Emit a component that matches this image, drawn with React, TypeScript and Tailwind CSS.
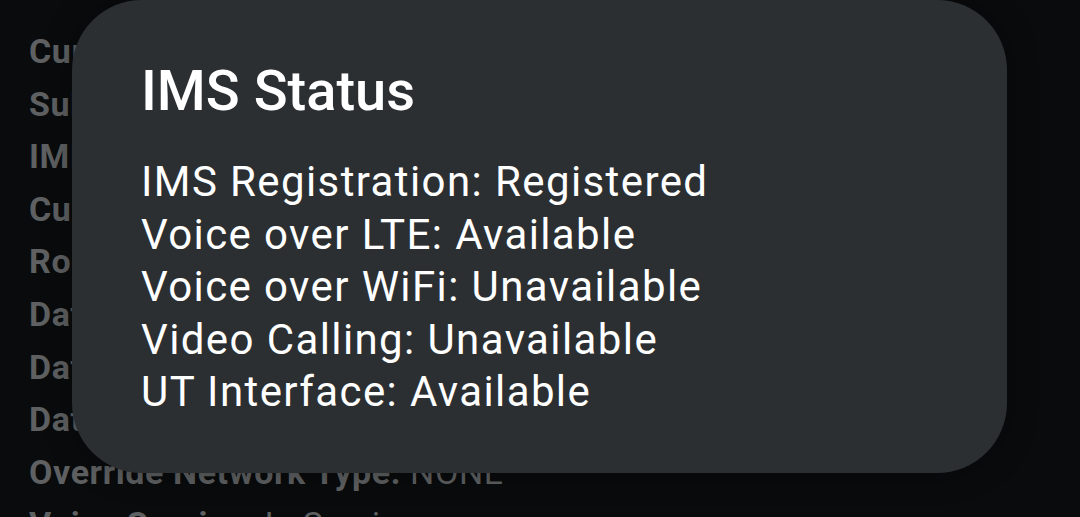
import React from "react";

const bgLines: { b: string; r?: string }[] = [
  { b: "Current subId:", r: " 1" },
  { b: "SubId of default data SIM:", r: " 1" },
  { b: "IMEI:", r: " 356789012345678" },
  { b: "Current network:", r: " Carrier" },
  { b: "Roaming:", r: " Not Roaming" },
  { b: "Data Service:", r: " Connected" },
  { b: "Data Network Type:", r: " LTE" },
  { b: "Data Raw Registration State:", r: " HOME" },
  { b: "Override Network Type:", r: " NONE" },
  { b: "Voice Service:", r: " In Service" },
];

export default function App() {
  return (
    <div
      className="relative w-[1080px] h-[517px] overflow-hidden bg-[#090b0c]"
      style={{ fontFamily: "Roboto, 'Noto Sans', sans-serif" }}
    >
      <div className="flex flex-col pl-[29px] pt-[25px] text-[34px] tracking-[0.6px] leading-[52.6px] text-[#5e6062] whitespace-nowrap">
        {bgLines.map((l, i) => (
          <div key={i}>
            <span className="font-bold">{l.b}</span>
            <span className="font-normal">{l.r}</span>
          </div>
        ))}
      </div>
      <div className="absolute left-[72px] top-0 w-[935px] h-[473px] rounded-[70px] bg-[#2b2f32] shadow-[0_0_30px_rgba(0,0,0,0.35)] pl-[69px] pt-[59px] text-white">
        <div className="text-[56px] font-medium leading-[64px]">IMS Status</div>
        <div className="mt-[33px] flex flex-col text-[42px] tracking-[1.4px] leading-[52.5px] font-normal">
          <div>IMS Registration: Registered</div>
          <div>Voice over LTE: Available</div>
          <div>Voice over WiFi: Unavailable</div>
          <div>Video Calling: Unavailable</div>
          <div>UT Interface: Available</div>
        </div>
      </div>
    </div>
  );
}
